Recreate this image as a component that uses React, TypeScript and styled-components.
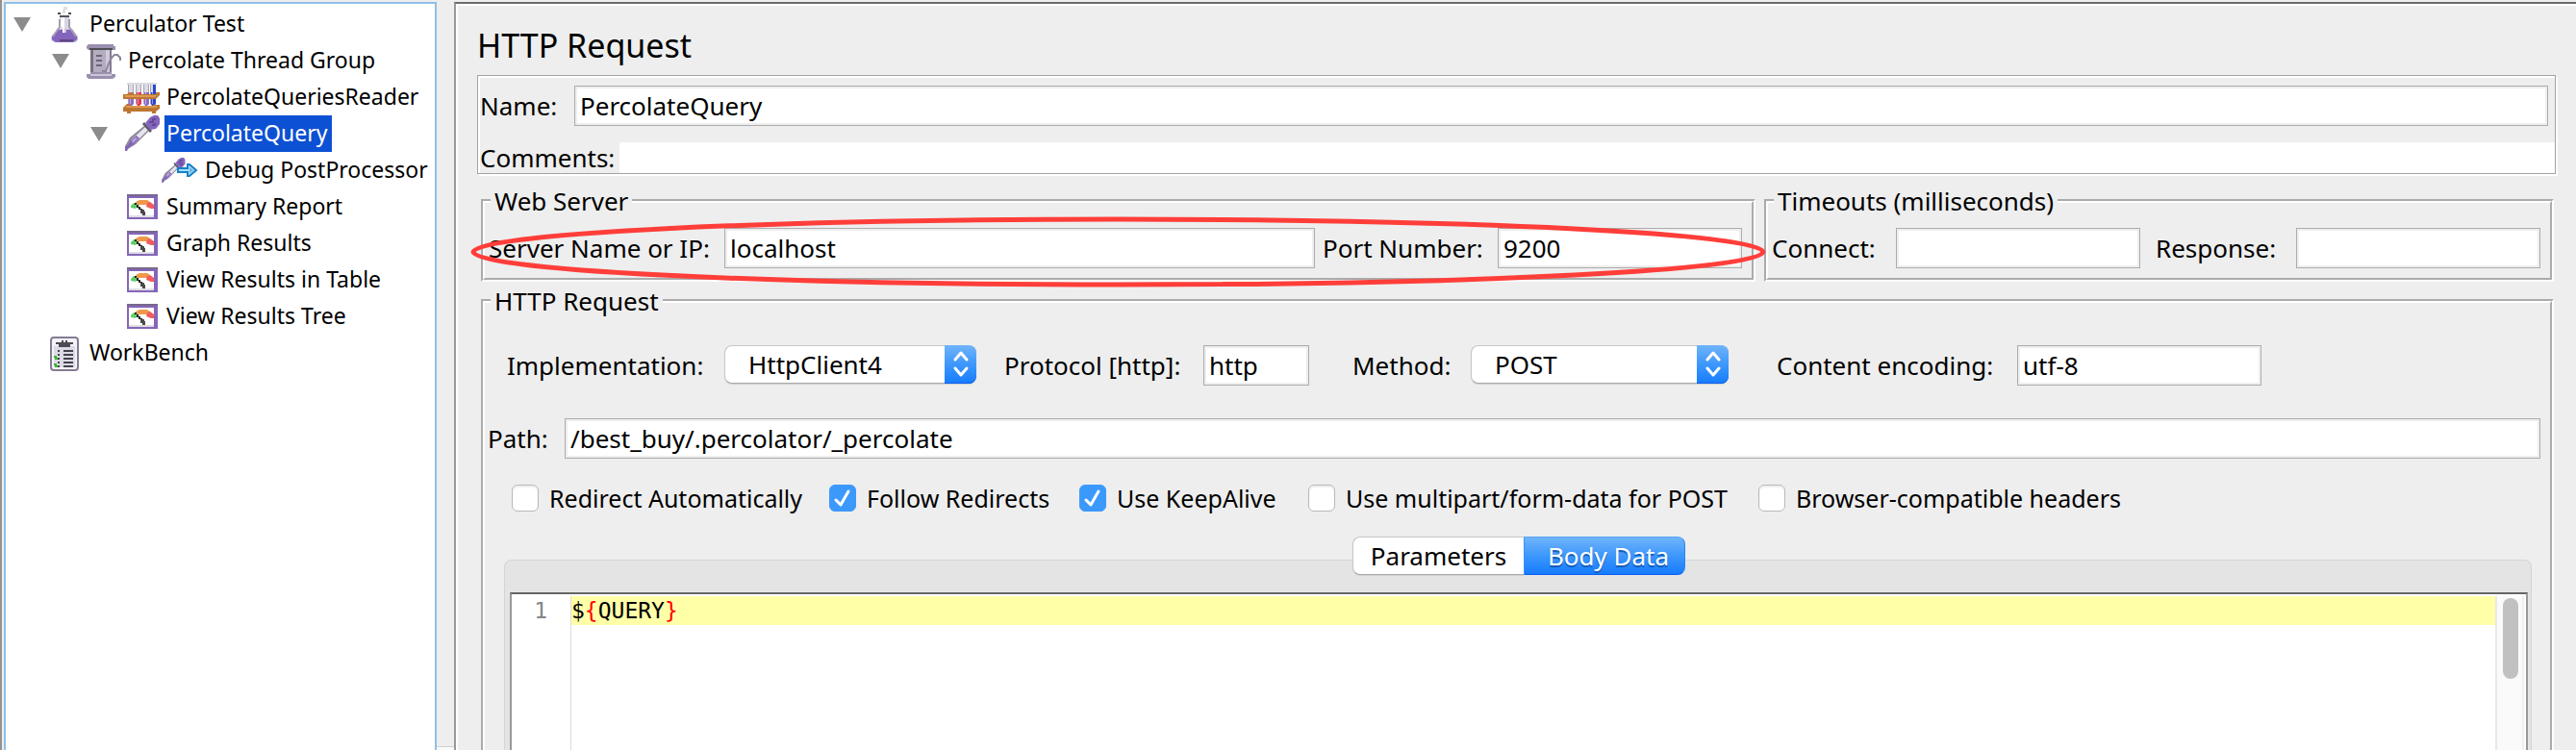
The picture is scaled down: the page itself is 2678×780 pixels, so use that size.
import React from 'react';
import styled, { createGlobalStyle, css } from 'styled-components';

const GlobalStyle = createGlobalStyle`
  *, *::before, *::after { box-sizing: border-box; }
  body {
    margin: 0;
    background: #eeeeee;
    color: #000;
    font-family: "Noto Sans", "Open Sans", sans-serif;
    font-size: 26px;
    line-height: 32px;
  }
  input, select, button { font: inherit; color: inherit; margin: 0; }
`;

const Window = styled.div`
  display: flex;
  height: 100vh;
  min-height: 700px;
  padding: 2px 0 0 2px;
  border-left: 2px solid #929292;
  overflow: hidden;
`;

/* ---------- test plan tree ---------- */

const TreePane = styled.nav`
  flex: 0 0 450px;
  border: 2px solid #90bfe8;
  border-bottom: 0;
  background: #fff;
  overflow: hidden;
`;

const TreeList = styled.ul`
  margin: 0;
  padding: 2px 0 0;
  list-style: none;
`;

const TreeRow = styled.li<{ $level: number }>`
  display: flex;
  align-items: center;
  height: 38px;
  padding-left: ${p => p.$level * 40 + 8}px;
  font-size: 23px;
  line-height: 36px;
  white-space: nowrap;
`;

const Twisty = styled.button`
  flex: 0 0 18px;
  width: 18px;
  height: 18px;
  margin-right: 16px;
  padding: 0;
  border: 0;
  background: none;
  svg { display: block; }
`;

const TwistySpace = styled.span`
  flex: 0 0 34px;
`;

const NodeIcon = styled.svg`
  flex: 0 0 38px;
  width: 38px;
  height: 38px;
  margin-right: 5px;
`;

const NodeLabel = styled.span<{ $selected?: boolean }>`
  height: 38px;
  padding: 0 5px 0 2px;
  ${p => p.$selected && css`
    background: #0c50d4;
    color: #fff;
  `}
`;

const Divider = styled.div`
  flex: 0 0 18px;
  display: flex;
  align-items: flex-end;
  &::after {
    content: '';
    flex: 1;
    height: 4px;
    border-top: 1px solid #cfcfcf;
    background: #fafafa;
  }
`;

/* ---------- editor pane ---------- */

const Main = styled.main`
  flex: 1;
  min-width: 0;
  display: flex;
  flex-direction: column;
  padding: 23px 21px 0 22px;
  border-top: 2px solid #6b6b6b;
  border-left: 2px solid #999;
  box-shadow: inset 2px 2px #fff;
`;

const Title = styled.h1`
  margin: 0 0 11px;
  font-size: 34px;
  line-height: 40px;
  font-weight: 400;
`;

const NamePanel = styled.section`
  padding: 10px 0 0 2px;
  border: 1px solid #a3a3a3;
  box-shadow: inset 2px 2px #fff, 2px 2px #fff;
`;

const Line = styled.div`
  display: flex;
  align-items: center;
`;

const NameLine = styled(Line)`
  padding-right: 7px;
  margin-bottom: 17px;
`;

const GroupLine = styled(Line)`
  padding-left: 4px;
`;

const Label = styled.label<{ $width: number }>`
  flex: 0 0 ${p => p.$width}px;
  white-space: nowrap;
`;

const TextBox = styled.input<{ $width?: number }>`
  ${p => (p.$width ? css`flex: 0 0 ${p.$width}px; width: ${p.$width}px;` : css`flex: 1; min-width: 0;`)}
  height: 42px;
  padding: 0 5px;
  border: 1px solid #acacac;
  border-radius: 0;
  background: #fff;
  box-shadow: inset 0 0 0 2px #eeeeee;
  outline: 0;
`;

const CommentBox = styled.input`
  flex: 1;
  min-width: 0;
  height: 32px;
  padding: 0;
  border: 0;
  background: #fff;
  outline: 0;
`;

const Group = styled.fieldset`
  position: relative;
  min-width: 0;
  margin: 0;
  padding: 15px 10px 10px 0;
  border: 4px groove #fff;
`;

const Legend = styled.legend`
  margin-left: 6px;
  padding: 0 4px;
  line-height: 26px;
`;

const ServerRow = styled.div`
  display: flex;
  gap: 9px;
  margin: 15px 2px 7px 4px;
`;

const ServerGroup = styled(Group)`
  flex: 1;
`;

const Gap = styled.span<{ $width: number }>`
  flex: 0 0 ${p => p.$width}px;
`;

const Highlight = styled.svg`
  position: absolute;
  top: 6px;
  left: -12px;
  width: calc(100% + 24px);
  height: 68px;
  overflow: visible;
  pointer-events: none;
  z-index: 1;
`;

const RequestGroup = styled(Group)`
  flex: 1;
  min-height: 0;
  display: flex;
  flex-direction: column;
  margin: 0 2px 0 4px;
  padding: 33px 0 0;
  border-bottom: 0;
`;

const OptionsLine = styled(Line)`
  padding-left: 23px;
`;

const PathLine = styled(Line)`
  margin: 34px 10px 27px 3px;
`;

const SelectFrame = styled.span<{ $width: number }>`
  flex: 0 0 ${p => p.$width}px;
  align-self: flex-start;
  display: grid;
  grid-template-columns: 1fr 33px;
  height: 40px;
`;

const Select = styled.select`
  grid-area: 1 / 1 / 2 / 3;
  appearance: none;
  padding: 0 40px 0 24px;
  border: 1px solid #c6c6c6;
  border-bottom-color: #a9a9a9;
  border-radius: 8px;
  background: #fff;
  box-shadow: 0 1px 1px #d0d0d0;
  outline: 0;
`;

const SelectArrows = styled.svg`
  grid-area: 1 / 2 / 2 / 3;
  width: 33px;
  height: 40px;
  border-radius: 0 8px 8px 0;
  background: linear-gradient(#6fb4fb, #3d97fc 50%, #167cff);
  box-shadow: inset 0 -1px #0b5ff2;
  pointer-events: none;
`;

const ChecksLine = styled.div`
  display: grid;
  grid-template-columns: 330px 260px 238px 468px auto;
  padding-left: 28px;
  font-size: 25px;
  line-height: 28px;
`;

const CheckLabel = styled.label`
  display: flex;
  align-items: center;
  gap: 11px;
  white-space: nowrap;
`;

const CheckFrame = styled.span`
  display: grid;
  width: 28px;
  height: 28px;
  > * { grid-area: 1 / 1; }
`;

const CheckBox = styled.input`
  appearance: none;
  width: 28px;
  height: 28px;
  border: 1px solid #b9b9b9;
  border-radius: 6px;
  background: #fff;
  box-shadow: inset 0 2px 2px #eeeeee;
  &:checked {
    border-color: #3b99fc;
    background: #3b99fc;
    box-shadow: none;
  }
  & + svg { visibility: hidden; pointer-events: none; }
  &:checked + svg { visibility: visible; }
`;

const TabPane = styled.div`
  flex: 1;
  min-height: 0;
  display: flex;
  flex-direction: column;
  margin: 50px 19px 0 20px;
  padding: 0 3px 0 5px;
  border: 1px solid #d4d4d4;
  border-bottom: 0;
  border-radius: 8px 8px 0 0;
  background: #e4e4e4;
`;

const TabBar = styled.div`
  align-self: center;
  display: flex;
  margin: -25px 0 18px;
`;

const activeTab = css`
  width: 168px;
  padding-left: 8px;
  border-color: #5aa5f5 #2b84f5 #0b5ff2 #3b93fa;
  border-radius: 0 8px 8px 0;
  background: linear-gradient(#6fb4fb, #3d97fc 50%, #167cff);
  color: #fff;
  text-shadow: 0 2px 1px #1459b0;
`;

const idleTab = css`
  width: 178px;
  border-right: 0;
  border-bottom-color: #a9a9a9;
  border-radius: 8px 0 0 8px;
  background: #fff;
  box-shadow: 0 1px 1px #d0d0d0;
`;

const Tab = styled.button<{ $active?: boolean }>`
  height: 40px;
  padding: 0;
  border: 1px solid #c6c6c6;
  ${p => (p.$active ? activeTab : idleTab)}
`;

const CodeEditor = styled.div`
  flex: 1;
  display: flex;
  padding: 2px 2px 0 0;
  border: 2px solid #999;
  border-top-color: #666;
  border-bottom: 0;
  background: #fff;
  font-family: "DejaVu Sans Mono", monospace;
  font-size: 23px;
  line-height: 30px;
`;

const Gutter = styled.div`
  flex: 0 0 62px;
  padding-right: 24px;
  border-right: 1px solid #dcdcdc;
  color: #858585;
  text-align: right;
`;

const Code = styled.div`
  flex: 1;
  outline: 0;
`;

const CurrentLine = styled.div`
  background: #ffffa8;
`;

const Brace = styled.span`
  color: #ff0000;
`;

const ScrollTrack = styled.div`
  flex: 0 0 30px;
  padding: 2px 4px 0 6px;
  border-left: 2px solid #e8e8e8;
  border-right: 2px solid #eeeeee;
  background: #fafafa;
`;

const ScrollThumb = styled.div`
  height: 84px;
  border-radius: 8px;
  background: #c1c1c1;
`;

/* ---------- tree icons ---------- */

const FlaskIcon = () => (
  <NodeIcon viewBox="0 0 38 38" aria-hidden="true">
    <path d="M18 1h4v3h-2v4h-3V4h1z" fill="#e0dfe6" />
    <path d="M14 11h10v11l8 10v4l-4 3H10l-5-3v-4l9-10z" fill="#d9d6e2" />
    <path d="M12 24l-6 8v4l4 3h19l4-3v-4l-6-8z" fill="#c9bfdf" />
    <path d="M12 25h7v3h2v-3h6l5 7v3l-4 3H10l-4-3v-3z" fill="#8564bd" />
    <path d="M16 12h3v16h-2v-7l-3 3v-2z" fill="#fff" />
    <path d="M14 14v8l-7 10M24 14v8l7 10" fill="none" stroke="#a49eb0" strokeWidth="2" />
    <path d="M14 10h10v2H14z" fill="#55535b" />
    <path d="M12 7h3v2h-3zM23 7h3v2h-3z" fill="#4d4b52" />
    <path d="M14 35h14v2H14z" fill="#5a4a78" />
  </NodeIcon>
);

const BeakerIcon = () => (
  <NodeIcon viewBox="0 0 38 38" aria-hidden="true">
    <path d="M6 6h22v28H6z" fill="#b4adc2" />
    <path d="M6 8h3v24H6z" fill="#77717f" />
    <path d="M22 8h4v24h-4z" fill="#cfcbd9" />
    <path d="M26 8h2v24h-2z" fill="#827b91" />
    <path d="M4 2h26v2h2v4H4L2 6V4z" fill="#9a8fae" />
    <path d="M5 6h24v2H5z" fill="#4f4d55" />
    <path d="M12 14h6M12 19h6M12 24h6" fill="none" stroke="#6c6579" strokeWidth="2" />
    <path d="M2 33h4v-2h22v2h4v3l-3 2H4l-2-2z" fill="#9a8fae" />
    <path d="M6 33h22v2H6z" fill="#cdc7d8" />
    <path d="M18 30h4l3-8 3-6 3-3h3l3 3v3" fill="none" stroke="#8e869c" strokeWidth="2" />
  </NodeIcon>
);

const RackIcon = () => (
  <NodeIcon viewBox="0 0 38 38" aria-hidden="true">
    {[
      ['5', '#8c6bc6'],
      ['13', '#e2355c'],
      ['21', '#8c6bc6'],
      ['28', '#2c45d2'],
    ].map(([x, fill]) => (
      <g key={x} transform={`translate(${x} 0)`}>
        <path d="M-1 4h8v2H6v20l-2 2H2l-2-2V6h-1z" fill="#dcdae3" />
        <path d="M0 6h1v20H0zM5 6h1v20H5z" fill="#a8a4b5" />
        <path d="M1 14h5v12l-2 2H2l-1-2z" fill={fill} />
        <path d="M2 14h1v12H2z" fill="#fff" opacity=".45" />
      </g>
    ))}
    <path d="M31 6h3v10h-3z" fill="#2c45d2" />
    <path d="M0 16h4l2-2h4v2h24v-2h4v3l-4 4H0z" fill="#bd7632" />
    <path d="M2 17h32l2-2v1l-3 3H2z" fill="#dd9a50" />
    <path d="M0 30l4-4h3v4h24v-3h7v4l-4 3v2h-4v-2H8v2H4v-2H0z" fill="#bd7632" />
    <path d="M2 30h32l2-2H4z" fill="#dd9a50" />
  </NodeIcon>
);

const Dropper = () => (
  <>
    <path d="M2 37v-5l5-9 16-13 5 5-15 15-8 5z" fill="#8f8a9c" />
    <path d="M6 31l3-6L23 12l3 3-14 14z" fill="#e6e4ec" />
    <path d="M14 21l3 3-7 7-4 2-2 4H2v-4l3-2 3-5z" fill="#8564bd" />
    <path d="M9 26l4-3 2 1-5 5z" fill="#b9a5dc" />
    <path d="M20 9l2-2 8 9-2 2z" fill="#5e5a68" />
    <path d="M23 8l5-6 4-2h4l2 3v6l-4 5-6 1z" fill="#8564bd" />
    <path d="M27 7h4V4h3M30 10h3V8" fill="none" stroke="#65499a" strokeWidth="2" />
  </>
);

const DropperIcon = () => (
  <NodeIcon viewBox="0 0 38 38" aria-hidden="true">
    <Dropper />
  </NodeIcon>
);

const PostProcessorIcon = () => (
  <NodeIcon viewBox="0 0 38 38" aria-hidden="true">
    <g transform="translate(-1 6) scale(.67 .7)">
      <Dropper />
    </g>
    <path d="M17 17h10v-4h2l7 6-7 6h-2v-4H17z" fill="#a9dcf5" stroke="#1680c8" strokeWidth="2" />
    <path d="M29 16l4 3-4 3z" fill="#5cb8e8" />
  </NodeIcon>
);

const GaugeIcon = () => (
  <NodeIcon viewBox="0 0 38 38" aria-hidden="true">
    <path d="M4 6h32v26H4z" fill="#8566b8" />
    <path d="M4 6h32v2H4z" fill="#76688c" />
    <path d="M6 10h26v20H6z" fill="#fff" />
    <path d="M6 28h26v2H6z" fill="#dedde3" />
    <path d="M8 20v-2l3-3h3l1 3-2 3z" fill="#5fcf68" />
    <path d="M13 14l4-2h8l3 2-2 3H15z" fill="#f0984a" />
    <path d="M25 15l3-1 4 3v4h-3l-5-2z" fill="#f25c5c" />
    <path d="M12 15h2v2h2v2h2v2h2v2h-2v-1h-2v-2h-2v-3h-2z" fill="#222" />
    <path d="M18 22h4v2h1v4h-3v-2h-2z" fill="#4a4a4a" />
  </NodeIcon>
);

const ClipboardIcon = () => (
  <NodeIcon viewBox="0 0 38 38" aria-hidden="true">
    <rect x="5" y="3" width="28" height="34" rx="3" fill="#f4f3f7" stroke="#857c94" strokeWidth="2" />
    <path d="M8 12h22v22H8z" fill="#dcdae4" />
    <path d="M10 8h6V6h2v2h2V6h2v2h6v2h-3v3H13v-3h-3z" fill="#4d4b52" />
    <path d="M18 17h10M18 21h10M18 25h10M18 29h10M18 33h10" stroke="#44424a" strokeWidth="2" />
    <path d="M12 17h2M12 21h2M12 25h2M12 29h2M12 33h2" stroke="#44424a" strokeWidth="2" />
    <path d="M8 23h2v2h2M8 31h2v2h2" fill="none" stroke="#38b42c" strokeWidth="2" />
  </NodeIcon>
);

type TreeNode = {
  label: string;
  level: number;
  icon: React.ComponentType;
  open?: boolean;
  selected?: boolean;
};

const nodes: TreeNode[] = [
  { label: 'Perculator Test', level: 0, icon: FlaskIcon, open: true },
  { label: 'Percolate Thread Group', level: 1, icon: BeakerIcon, open: true },
  { label: 'PercolateQueriesReader', level: 2, icon: RackIcon },
  { label: 'PercolateQuery', level: 2, icon: DropperIcon, open: true, selected: true },
  { label: 'Debug PostProcessor', level: 3, icon: PostProcessorIcon },
  { label: 'Summary Report', level: 2, icon: GaugeIcon },
  { label: 'Graph Results', level: 2, icon: GaugeIcon },
  { label: 'View Results in Table', level: 2, icon: GaugeIcon },
  { label: 'View Results Tree', level: 2, icon: GaugeIcon },
  { label: 'WorkBench', level: 0, icon: ClipboardIcon },
];

const Tree = () => (
  <TreePane aria-label="Test plan">
    <TreeList>
      {nodes.map(({ label, level, icon: Icon, open, selected }) => (
        <TreeRow key={label} $level={level}>
          {open ? (
            <Twisty type="button" aria-label={`Collapse ${label}`} aria-expanded="true">
              <svg width="18" height="18" viewBox="0 0 18 18" aria-hidden="true">
                <path d="M0 2h18L9 17z" fill="#8c8c8c" />
              </svg>
            </Twisty>
          ) : (
            <TwistySpace />
          )}
          <Icon />
          <NodeLabel $selected={selected}>{label}</NodeLabel>
        </TreeRow>
      ))}
    </TreeList>
  </TreePane>
);

const DropDown = ({ id, width, options }: { id: string; width: number; options: string[] }) => (
  <SelectFrame $width={width}>
    <Select id={id} defaultValue={options[0]}>
      {options.map(o => (
        <option key={o}>{o}</option>
      ))}
    </Select>
    <SelectArrows viewBox="0 0 33 40" aria-hidden="true">
      <path d="M11 15l6-7 6 7M11 24l6 7 6-7" fill="none" stroke="#fff" strokeWidth="3" strokeLinecap="round" strokeLinejoin="round" />
    </SelectArrows>
  </SelectFrame>
);

const Check = ({ label, checked }: { label: string; checked?: boolean }) => (
  <CheckLabel>
    <CheckFrame>
      <CheckBox type="checkbox" defaultChecked={checked} />
      <svg width="28" height="28" viewBox="0 0 28 28" aria-hidden="true">
        <path d="M7 16l5 5 8-14" fill="none" stroke="#fff" strokeWidth="3" strokeLinecap="round" strokeLinejoin="round" />
      </svg>
    </CheckFrame>
    {label}
  </CheckLabel>
);

export default function App() {
  return (
    <>
      <GlobalStyle />
      <Window>
        <Tree />
        <Divider />
        <Main>
          <Title>HTTP Request</Title>

          <NamePanel>
            <NameLine>
              <Label htmlFor="name" $width={98}>Name:</Label>
              <TextBox id="name" defaultValue="PercolateQuery" />
            </NameLine>
            <Line>
              <Label htmlFor="comments" $width={145}>Comments:</Label>
              <CommentBox id="comments" />
            </Line>
          </NamePanel>

          <ServerRow>
            <ServerGroup>
              <Legend>Web Server</Legend>
              <GroupLine>
                <Label htmlFor="server" $width={245}>Server Name or IP:</Label>
                <TextBox id="server" defaultValue="localhost" />
                <Gap $width={8} />
                <Label htmlFor="port" $width={182}>Port Number:</Label>
                <TextBox id="port" $width={254} defaultValue="9200" />
              </GroupLine>
              <Highlight aria-hidden="true">
                <ellipse cx="50%" cy="50%" rx="50%" ry="50%" fill="none" stroke="#ff3e3a" strokeWidth="5" />
              </Highlight>
            </ServerGroup>
            <Group>
              <Legend>Timeouts (milliseconds)</Legend>
              <GroupLine>
                <Label htmlFor="connect" $width={129}>Connect:</Label>
                <TextBox id="connect" $width={254} />
                <Gap $width={16} />
                <Label htmlFor="response" $width={146}>Response:</Label>
                <TextBox id="response" $width={254} />
              </GroupLine>
            </Group>
          </ServerRow>

          <RequestGroup>
            <Legend>HTTP Request</Legend>
            <OptionsLine>
              <Label htmlFor="implementation" $width={226}>Implementation:</Label>
              <DropDown id="implementation" width={262} options={['HttpClient4', 'HttpClient3.1', 'Java']} />
              <Gap $width={29} />
              <Label htmlFor="protocol" $width={207}>Protocol [http]:</Label>
              <TextBox id="protocol" $width={110} defaultValue="http" />
              <Gap $width={45} />
              <Label htmlFor="method" $width={123}>Method:</Label>
              <DropDown id="method" width={268} options={['POST', 'GET', 'PUT', 'DELETE']} />
              <Gap $width={50} />
              <Label htmlFor="encoding" $width={250}>Content encoding:</Label>
              <TextBox id="encoding" $width={254} defaultValue="utf-8" />
            </OptionsLine>
            <PathLine>
              <Label htmlFor="path" $width={80}>Path:</Label>
              <TextBox id="path" defaultValue="/best_buy/.percolator/_percolate" />
            </PathLine>
            <ChecksLine>
              <Check label="Redirect Automatically" />
              <Check label="Follow Redirects" checked />
              <Check label="Use KeepAlive" checked />
              <Check label="Use multipart/form-data for POST" />
              <Check label="Browser-compatible headers" />
            </ChecksLine>
            <TabPane>
              <TabBar role="tablist">
                <Tab type="button" role="tab" aria-selected="false">Parameters</Tab>
                <Tab type="button" role="tab" aria-selected="true" $active>Body Data</Tab>
              </TabBar>
              <CodeEditor>
                <Gutter>1</Gutter>
                <Code contentEditable suppressContentEditableWarning role="textbox" aria-label="Body Data" spellCheck={false}>
                  <CurrentLine>
                    $<Brace>{'{'}</Brace>QUERY<Brace>{'}'}</Brace>
                  </CurrentLine>
                </Code>
                <ScrollTrack>
                  <ScrollThumb />
                </ScrollTrack>
              </CodeEditor>
            </TabPane>
          </RequestGroup>
        </Main>
      </Window>
    </>
  );
}
